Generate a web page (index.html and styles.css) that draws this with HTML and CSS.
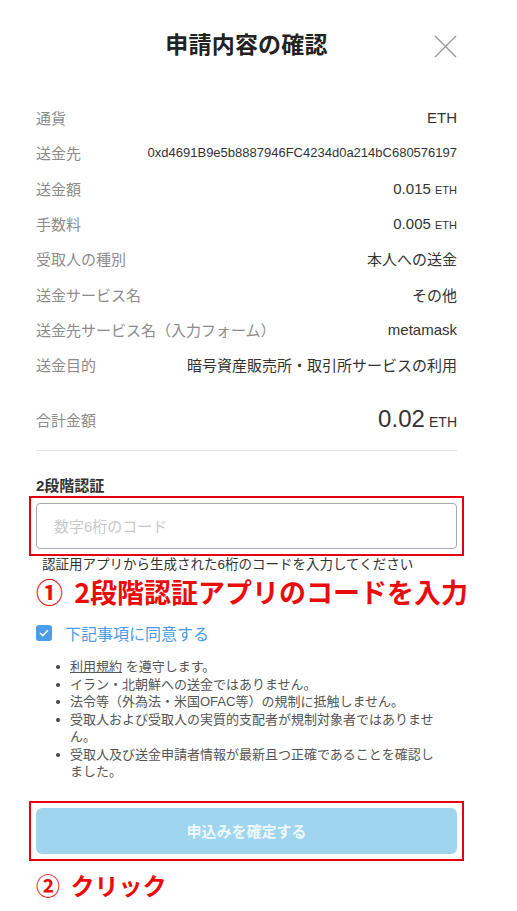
FILE: index.html
```html
<!DOCTYPE html>
<html lang="ja">

<head>
    <meta charset="utf-8">
    <title>申請内容の確認</title>
    <meta name="viewport" content="width=device-width, initial-scale=1.0">
    <link rel="stylesheet" href="styles.css">
</head>

<body>
    <div class="modal">
        <div class="modal-head">
            <span></span>
            <h2 class="title">申請内容の確認</h2>
            <button class="close" aria-label="閉じる">
                <svg width="23" height="23" viewBox="0 0 23 23">
                    <path d="M1 1 L22 22 M22 1 L1 22" stroke="#9a9a9a" stroke-width="1.4" fill="none" />
                </svg>
            </button>
        </div>

        <!-- 申請内容 -->
        <dl class="detail">
            <div class="row"><dt>通貨</dt><dd>ETH</dd></div>
            <div class="row"><dt>送金先</dt><dd class="addr">0xd4691B9e5b8887946FC4234d0a214bC680576197</dd></div>
            <div class="row"><dt>送金額</dt><dd>0.015 <small>ETH</small></dd></div>
            <div class="row"><dt>手数料</dt><dd>0.005 <small>ETH</small></dd></div>
            <div class="row"><dt>受取人の種別</dt><dd>本人への送金</dd></div>
            <div class="row"><dt>送金サービス名</dt><dd>その他</dd></div>
            <div class="row"><dt>送金先サービス名（入力フォーム）</dt><dd>metamask</dd></div>
            <div class="row"><dt>送金目的</dt><dd>暗号資産販売所・取引所サービスの利用</dd></div>
            <div class="row total"><dt>合計金額</dt><dd><span class="big">0.02</span> <small>ETH</small></dd></div>
        </dl>

        <!-- 2段階認証 -->
        <div class="otp">
            <label class="otp-label" for="code">2段階認証</label>
            <div class="mark">
                <input type="text" id="code" placeholder="数字6桁のコード">
            </div>
            <p class="help">認証用アプリから生成された6桁のコードを入力してください</p>
            <p class="note"><span class="num">①</span> 2段階認証アプリのコードを入力</p>
        </div>

        <label class="agree">
            <span class="check">
                <svg width="10" height="8" viewBox="0 0 10 8">
                    <path d="M1 4 L3.8 6.6 L9 1.2" stroke="#fff" stroke-width="1.6" fill="none" />
                </svg>
            </span>
            下記事項に同意する
        </label>

        <ul class="terms">
            <li><u>利用規約</u> を遵守します。</li>
            <li>イラン・北朝鮮への送金ではありません。</li>
            <li>法令等（外為法・米国OFAC等）の規制に抵触しません。</li>
            <li>受取人および受取人の実質的支配者が規制対象者ではありません。</li>
            <li>受取人及び送金申請者情報が最新且つ正確であることを確認しました。</li>
        </ul>

        <div class="mark submit-mark">
            <button class="submit" disabled>申込みを確定する</button>
        </div>
        <p class="note note-click"><span class="num">②</span> クリック</p>
    </div>
</body>

</html>
```

FILE: styles.css
```css
* {
    margin: 0;
    padding: 0;
    box-sizing: border-box;
}

body {
    font-family: "Liberation Sans", "Noto Sans CJK JP", sans-serif;
    background: #fff;
    color: #333;
}

.modal {
    width: 517px;
    padding: 0 60px 0 36px;
}

.modal-head {
    display: grid;
    grid-template-columns: 23px 1fr 23px;
    align-items: center;
    height: 90px;
}

.title {
    text-align: center;
    font-size: 23px;
    font-weight: bold;
    color: #222;
    line-height: 1;
    letter-spacing: 0.2px;
}

.close {
    border: none;
    background: none;
    display: flex;
    margin-top: 2px;
}

.detail {
    margin-top: 10px;
}

.row {
    display: flex;
    justify-content: space-between;
    align-items: center;
    height: 35.3px;
    font-size: 15px;
}

.row dt {
    color: #8c8c8c;
}

.row dd {
    color: #333;
    text-align: right;
}

.row dd small {
    font-size: 11px;
}

.row .addr {
    font-size: 13px;
}

.total {
    height: 50px;
    margin-top: 12px;
    box-sizing: content-box;
    padding-bottom: 6px;
    border-bottom: 1px solid #e2e2e2;
}

.total .big {
    font-size: 24px;
}

.total dd small {
    font-size: 14px;
}

.otp {
    margin-top: 25px;
}

.otp-label {
    display: block;
    font-size: 15px;
    font-weight: bold;
    color: #333;
    line-height: 20px;
    margin-bottom: 7px;
}

.mark {
    outline: 2px solid #e50012;
    outline-offset: 5px;
}

input {
    display: block;
    width: 100%;
    height: 46px;
    padding: 0 17px;
    border: 1px solid #a9a9b4;
    border-radius: 4px;
    font-family: inherit;
    font-size: 15px;
    color: #333;
}

input::placeholder {
    color: #c9c9c9;
}

.help {
    margin: 7px 0 0 6px;
    font-size: 13.5px;
    line-height: 18px;
    color: #333;
}

.note {
    margin-top: 3px;
    font-family: "Noto Sans CJK JP", sans-serif;
    font-size: 27px;
    font-weight: 700;
    line-height: 30px;
    color: #ec0b0b;
    white-space: nowrap;
}

.note .num {
    margin-right: 5px;
}

.agree {
    display: flex;
    align-items: center;
    gap: 13px;
    height: 24px;
    margin-top: 14px;
    font-size: 16px;
    color: #4a9de6;
}

.check {
    width: 16px;
    height: 16px;
    border-radius: 3px;
    background: #4a9de6;
    display: flex;
    align-items: center;
    justify-content: center;
}

.terms {
    margin: 13px 0 0 34px;
    width: 366px;
    font-size: 13px;
    line-height: 17.5px;
    color: #555;
    list-style: none;
}

.terms li {
    position: relative;
}

.terms li::before {
    content: "";
    position: absolute;
    left: -14px;
    top: 7px;
    width: 4px;
    height: 4px;
    border-radius: 50%;
    background: #444;
}

.submit-mark {
    margin-top: 27px;
}

.submit {
    display: block;
    width: 100%;
    height: 46px;
    border: none;
    border-radius: 6px;
    background: #9fd5ef;
    color: #eef8fd;
    font-family: inherit;
    font-size: 15px;
    font-weight: bold;
}

.note-click {
    margin-top: 16px;
    font-size: 24px;
}
```
